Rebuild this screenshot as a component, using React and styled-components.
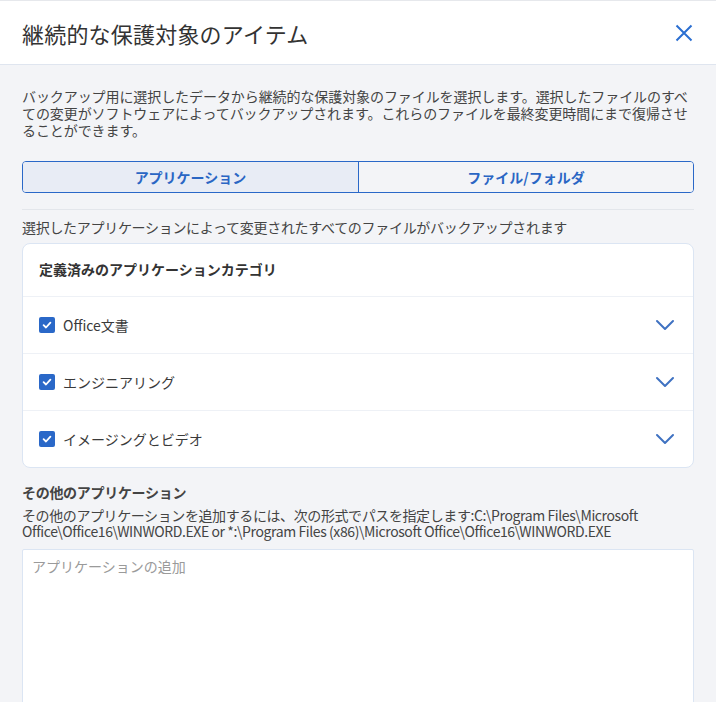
import { useState } from "react";
import styled, { createGlobalStyle } from "styled-components";

const GlobalStyle = createGlobalStyle`
  html, body {
    margin: 0;
    padding: 0;
    background: #f3f4f7;
  }
  body {
    font-family: "Noto Sans CJK JP", "Noto Sans", sans-serif;
    color: #3a3a3a;
  }
`;

const Dialog = styled.div`
  width: 716px;
  height: 702px;
  overflow: hidden;
  background: #f3f4f7;
  border-top: 1px solid #e6e8ec;
  box-sizing: border-box;
`;

const Header = styled.header`
  height: 63px;
  display: flex;
  align-items: center;
  justify-content: space-between;
  padding: 0 20px 0 22px;
  background: #fff;
  border-bottom: 1px solid #dfe5ef;
`;

const Title = styled.h1`
  margin: 0;
  font-size: 22px;
  font-weight: 400;
  color: #333;
  letter-spacing: 0.2px;
`;

const CloseButton = styled.button`
  border: none;
  background: none;
  padding: 0;
  width: 24px;
  height: 24px;
  display: flex;
  align-items: center;
  justify-content: center;
  cursor: pointer;
`;

const Body = styled.div`
  padding: 23px 22px 0;
  display: flex;
  flex-direction: column;
`;

const Text = styled.p`
  margin: 0;
  font-size: 14px;
  line-height: ${(p) => p.$lh || 17}px;
  letter-spacing: ${(p) => p.$ls || "0"};
  color: #444;
  font-weight: ${(p) => (p.$bold ? 700 : 400)};
`;

const Tabs = styled.div`
  margin-top: 22px;
  display: grid;
  grid-template-columns: 1fr 1fr;
  height: 32px;
  box-sizing: border-box;
  border: 1px solid #2a68c8;
  border-radius: 4px;
  overflow: hidden;
`;

const Tab = styled.button`
  border: none;
  border-left: ${(p) => (p.$first ? "none" : "1px solid #2a68c8")};
  background: ${(p) => (p.$active ? "#e8ecf5" : "#f3f4f7")};
  color: #2a66c4;
  font-family: inherit;
  font-size: 14px;
  font-weight: 700;
  cursor: pointer;
`;

const Divider = styled.hr`
  margin: 16px 0 8px;
  border: none;
  border-top: 1px solid #e3e6eb;
`;

const Card = styled.div`
  margin-top: 7px;
  background: #fff;
  border: 1px solid #dbe5f3;
  border-radius: 8px;
`;

const CardHeader = styled.div`
  height: 53px;
  display: flex;
  align-items: center;
  padding: 0 16px 2px;
  box-sizing: border-box;
  font-size: 14px;
  font-weight: 700;
  color: #333;
  border-bottom: 1px solid #eef1f6;
`;

const Row = styled.div`
  height: 56px;
  display: flex;
  align-items: center;
  padding: 0 18px 0 16px;
  border-top: ${(p) => (p.$first ? "none" : "1px solid #eef1f6")};
`;

const Check = styled.span`
  width: 16px;
  height: 16px;
  border-radius: 2px;
  background: #2a68c8;
  display: inline-flex;
  align-items: center;
  justify-content: center;
  flex-shrink: 0;
`;

const Label = styled.span`
  margin-left: 8px;
  flex: 1;
  font-size: 14px;
  color: #3a3a3a;
`;

const Section = styled.div`
  margin-top: 15px;
  display: flex;
  flex-direction: column;
`;

const SectionTitle = styled(Text)`
  margin-bottom: 6px;
`;

const Input = styled.textarea`
  margin-top: 10px;
  height: 200px;
  resize: none;
  border: 1px solid #dbe5f3;
  border-radius: 2px;
  background: #fff;
  padding: 6px 9px;
  font-family: inherit;
  font-size: 14px;
  color: #333;
  outline: none;
  &::placeholder {
    color: #9a9a9a;
  }
`;

const CheckIcon = () => (
  <svg width="10" height="10" viewBox="0 0 10 10">
    <path d="M1.6 5.2 L4 7.5 L8.4 2.6" fill="none" stroke="#fff" strokeWidth="1.8" strokeLinecap="round" strokeLinejoin="round" />
  </svg>
);

const Chevron = () => (
  <svg width="20" height="12" viewBox="0 0 20 12">
    <path d="M2 2 L10 10 L18 2" fill="none" stroke="#3f72c2" strokeWidth="2" strokeLinecap="round" strokeLinejoin="round" />
  </svg>
);

const categories = ["Office文書", "エンジニアリング", "イメージングとビデオ"];

export default function App() {
  const [tab, setTab] = useState(0);
  return (
    <Dialog>
      <GlobalStyle />
      <Header>
        <Title>継続的な保護対象のアイテム</Title>
        <CloseButton aria-label="閉じる">
          <svg width="18" height="18" viewBox="0 0 18 18">
            <path d="M1.5 1.5 L16.5 16.5 M16.5 1.5 L1.5 16.5" stroke="#2b6fd1" strokeWidth="2" />
          </svg>
        </CloseButton>
      </Header>
      <Body>
        <Text $ls="-0.08px">
          バックアップ用に選択したデータから継続的な保護対象のファイルを選択します。選択したファイルのすべての変更がソフトウェアによってバックアップされます。これらのファイルを最終変更時間にまで復帰させることができます。
        </Text>
        <Tabs>
          <Tab $first $active={tab === 0} onClick={() => setTab(0)}>アプリケーション</Tab>
          <Tab $active={tab === 1} onClick={() => setTab(1)}>ファイル/フォルダ</Tab>
        </Tabs>
        <Divider />
        <Text $lh={18} $ls="-0.3px">選択したアプリケーションによって変更されたすべてのファイルがバックアップされます</Text>
        <Card>
          <CardHeader>定義済みのアプリケーションカテゴリ</CardHeader>
          {categories.map((c, i) => (
            <Row key={c} $first={i === 0}>
              <Check><CheckIcon /></Check>
              <Label>{c}</Label>
              <Chevron />
            </Row>
          ))}
        </Card>
        <Section>
          <SectionTitle $bold $lh={18} $ls="-0.3px">その他のアプリケーション</SectionTitle>
          <Text $lh={16} $ls="-0.4px">
            その他のアプリケーションを追加するには、次の形式でパスを指定します:C:\Program Files\Microsoft Office\Office16\WINWORD.EXE or *:\Program Files (x86)\Microsoft Office\Office16\WINWORD.EXE
          </Text>
          <Input placeholder="アプリケーションの追加" />
        </Section>
      </Body>
    </Dialog>
  );
}
